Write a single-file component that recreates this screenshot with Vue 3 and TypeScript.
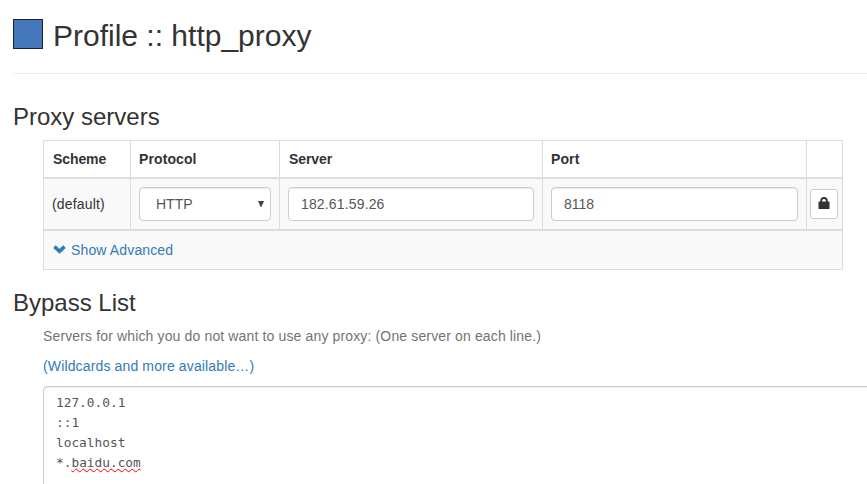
<script setup lang="ts">
import { ref } from 'vue'
const server = ref('182.61.59.26')
const port = ref('8118')
const bypass: string[] = ['127.0.0.1', '::1', 'localhost']
</script>

<template>
  <main class="page">
    <header class="head">
      <span class="swatch"></span>
      <h1>Profile :: http_proxy</h1>
    </header>
    <section>
      <h2>Proxy servers</h2>
      <div class="table">
        <div class="row header">
          <div>Scheme</div><div>Protocol</div><div>Server</div><div>Port</div><div></div>
        </div>
        <div class="row body">
          <div>(default)</div>
          <div><span class="control select"><span>HTTP</span><svg width="6" height="6" viewBox="0 0 6 6"><path d="M0 0h6L3.4 6h-.8z" fill="#444" /></svg></span></div>
          <div><input v-model="server" class="control server" /></div>
          <div><input v-model="port" class="control" /></div>
          <div class="lockcell">
            <button class="lock"><svg width="12" height="12" viewBox="0 0 12 12"><path d="M3.2 6V3.6Q3.2 1 6 1T8.8 3.6V6" fill="none" stroke="#333" stroke-width="1.8" /><rect x="0.5" y="4.5" width="11" height="7.5" rx=".6" fill="#333" /></svg></button>
          </div>
        </div>
        <div class="advanced">
          <svg width="13" height="9" viewBox="0 0 13 9"><path d="M1.4 1.6l5.1 4.7 5.1-4.7" fill="none" stroke="#337ab7" stroke-width="3.6" /></svg>
          <a>Show Advanced</a>
        </div>
      </div>
    </section>
    <section class="bypass">
      <h2>Bypass List</h2>
      <p class="help">Servers for which you do not want to use any proxy: (One server on each line.)</p>
      <p class="link">(Wildcards and more available…)</p>
      <div class="area">
        <div v-for="item in bypass" :key="item">{{ item }}</div>
        <div>*.<span class="spell">baidu.com</span></div>
      </div>
    </section>
  </main>
</template>

<style>
body { overflow: hidden; background: #fff; }
</style>
<style scoped>
* { box-sizing: border-box; }
.page { width: 867px; height: 484px; overflow: hidden; padding-left: 13px; font: 14px/20px "Liberation Sans", Arial, sans-serif; color: #333; }
.head { height: 74px; display: flex; align-items: flex-start; gap: 10px; border-bottom: 1px solid #eee; padding-top: 16px; }
.swatch { width: 30px; height: 30px; margin-top: 3px; background: #4477bb; border: 1px solid #222; }
h1 { margin: 0; font: 400 30px/40px "Liberation Sans", Arial, sans-serif; }
h2 { margin: 0; font: 400 24px/26px "Liberation Sans", Arial, sans-serif; }
section { padding-top: 30px; }
.table { width: 800px; margin: 10px 0 0 30px; border: 1px solid #ddd; }
.row { display: grid; grid-template-columns: 86px 149px 263px 264px 36px; }
.row > div { padding: 8px; border-left: 1px solid #ddd; display: flex; align-items: center; }
.row > div:first-child { border-left: 0; }
.header { height: 38px; font-weight: 700; border-bottom: 2px solid #ddd; letter-spacing: .1px; }
.header > div:nth-child(3) { padding-left: 9px; letter-spacing: -.1px; }
.header > div:first-child { padding-left: 9px; letter-spacing: -.1px; }
.body { height: 50px; background: #f9f9f9; letter-spacing: .17px; }
.control { width: 100%; height: 34px; border: 1px solid #ccc; border-radius: 4px; background: #fff; color: #555; padding: 6px 12px; font: 14px/20px "Liberation Sans", Arial, sans-serif; box-shadow: inset 0 1px 1px rgba(0,0,0,.075); }
.server { letter-spacing: .15px; }
.select { display: flex; align-items: center; justify-content: space-between; padding: 6px 6px 6px 16px; letter-spacing: 0; }
.row > .lockcell { padding: 8px 3px; }
.lock { width: 28px; height: 30px; padding: 0 0 2px; background: #fff; border: 1px solid #ccc; border-radius: 3px; display: flex; align-items: center; justify-content: center; }
.advanced { height: 40px; border-top: 2px solid #ddd; background: #f9f9f9; color: #337ab7; display: flex; align-items: center; gap: 5px; padding-left: 9px; letter-spacing: .14px; }
.advanced svg { margin-bottom: 2px; }
.bypass { padding-top: 20px; }
p { margin: 10px 0 0 30px; letter-spacing: .14px; }
.help { color: #737373; }
.link { color: #337ab7; }
.area { margin: 10px 0 0 30px; width: 850px; height: 110px; border: 1px solid #ccc; border-radius: 4px; padding: 6px 12px; font: 12.8px/20px "DejaVu Sans Mono", monospace; color: #555; box-shadow: inset 0 1px 1px rgba(0,0,0,.075); }
.spell { text-decoration: underline wavy #f00 1px; }
</style>
